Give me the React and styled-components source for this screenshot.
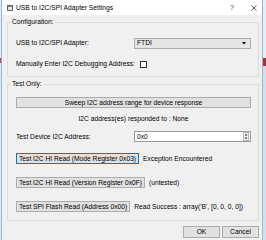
import React from "react";
import styled, { createGlobalStyle } from "styled-components";

const Global = createGlobalStyle`
  html, body { margin: 0; padding: 0; background: #d9e4ef; }
  body { font-family: "Liberation Sans", Arial, sans-serif; color: #000; }
  #root { width: 266px; height: 240px; overflow: hidden; }
`;

const Desktop = styled.div`
  display: flex;
  width: 266px;
  height: 240px;
  overflow: hidden;
  background: #dbe5ef;
`;

const DesktopStrip = styled.div`
  flex: none;
  width: ${(p) => p.$w}px;
  display: flex;
  flex-direction: column;
  background: #dfe7f0;
`;

const Patch = styled.div`
  flex: none;
  height: ${(p) => p.$h}px;
  background: ${(p) => p.$c};
`;

const Window = styled.div`
  flex: none;
  width: 262px;
  box-sizing: border-box;
  border-left: 1px solid #93b8de;
  border-right: 1px solid #93b8de;
  display: flex;
  flex-direction: column;
  background: #f0f0f0;
`;

const TitleBar = styled.div`
  flex: none;
  height: 15px;
  background: #ffffff;
  display: flex;
  align-items: center;
`;

const AppIcon = styled.svg`
  flex: none;
  margin-left: 5px;
  width: 6px;
  height: 6px;
`;

const Title = styled.div`
  margin-left: 3px;
  font-size: 6.7px;
  line-height: 8px;
  white-space: nowrap;
  flex: 1;
`;

const TitleGlyph = styled.div`
  flex: none;
  width: ${(p) => p.$w}px;
  margin-right: ${(p) => p.$mr || 0}px;
  display: flex;
  align-items: center;
  justify-content: center;
  font-size: 7px;
  line-height: 8px;
  color: #444;
`;

const Body = styled.div`
  flex: 1;
  display: flex;
  flex-direction: column;
  padding: 3px 3px 0 5px;
`;

const Group = styled.fieldset`
  margin: ${(p) => p.$mt || 0}px 0 0 0;
  padding: ${(p) => p.$pt}px 7px ${(p) => p.$pb}px 8px;
  border: 1px solid #dcdcdc;
  min-width: 0;
  display: flex;
  flex-direction: column;
`;

const Legend = styled.legend`
  margin-left: -5px;
  padding: 0 1px;
  font-size: 6.7px;
  line-height: 8px;
  height: 8px;
`;

const FormRow = styled.div`
  display: grid;
  grid-template-columns: 118px 1fr;
  align-items: center;
  height: ${(p) => p.$h || 12}px;
  margin-top: ${(p) => p.$mt || 0}px;
`;

const Label = styled.span`
  font-size: 6.7px;
  line-height: 8px;
  white-space: nowrap;
`;

const CheckRow = styled.label`
  display: flex;
  align-items: center;
  gap: 5px;
  height: 12px;
  margin-top: ${(p) => p.$mt || 0}px;
`;

const Combo = styled.div`
  height: 11px;
  box-sizing: border-box;
  border: 1px solid #adadad;
  background: #e5e5e5;
  display: flex;
  align-items: center;
  padding: 0 4px 0 2px;
  font-size: 6.7px;
  line-height: 8px;
`;

const Grow = styled.span`
  flex: 1;
`;

const Check = styled.span`
  flex: none;
  width: 7px;
  height: 7px;
  box-sizing: border-box;
  border: 1px solid #333;
  background: #fff;
  display: block;
`;

const Spin = styled.div`
  height: 11px;
  box-sizing: border-box;
  border: 1px solid #9c9c9c;
  background: #fff;
  display: flex;
  align-items: center;
  padding: 0 1px 0 2px;
  font-size: 6.7px;
  line-height: 8px;
`;

const Button = styled.button`
  font-family: "Liberation Sans", Arial, sans-serif;
  font-size: 6.7px;
  line-height: 8px;
  height: ${(p) => p.$h || 11}px;
  width: ${(p) => (p.$w ? `${p.$w}px` : "auto")};
  box-sizing: border-box;
  margin: 0;
  padding: 0 2px;
  border: 1px solid ${(p) => (p.$focus ? "#0078d7" : "#adadad")};
  background: #e1e1e1;
  color: #000;
  white-space: nowrap;
  flex: none;
`;

const WideButton = styled(Button)`
  width: 100%;
`;

const CenterText = styled.div`
  margin-top: ${(p) => p.$mt}px;
  height: 8px;
  font-size: 6.7px;
  line-height: 8px;
  text-align: center;
  white-space: nowrap;
`;

const ActionRow = styled.div`
  display: flex;
  align-items: center;
  height: 11px;
  margin-top: ${(p) => p.$mt}px;
`;

const Result = styled.span`
  margin-left: 4px;
  font-size: 6.7px;
  line-height: 8px;
  white-space: nowrap;
`;

const Footer = styled.div`
  display: flex;
  justify-content: flex-end;
  gap: 2px;
  margin-top: 5px;
`;

const DownArrow = () => (
  <svg width="4" height="3" viewBox="0 0 4 3">
    <path d="M0 0 H4 L2 2.5 Z" fill="#000" />
  </svg>
);

const SpinArrows = () => (
  <svg width="6" height="9" viewBox="0 0 6 9">
    <rect x="0.5" y="0.5" width="5" height="8" fill="#f4f4f4" stroke="#b5b5b5" />
    <path d="M1.5 3.5 L3 1.8 L4.5 3.5 Z" fill="#222" />
    <path d="M1.5 5.5 L3 7.2 L4.5 5.5 Z" fill="#222" />
  </svg>
);

export default function App() {
  return (
    <>
      <Global />
      <Desktop>
        <DesktopStrip $w={1}>
          <Patch $h={58} $c="#e4ebf3" />
          <Patch $h={5} $c="#c8404a" />
          <Patch $h={177} $c="#dfe7f0" />
        </DesktopStrip>
        <Window>
          <TitleBar>
            <AppIcon viewBox="0 0 6 6">
              <rect x="0.5" y="0.5" width="5" height="5" fill="#dfe9df" stroke="#6b6b6b" />
              <rect x="1" y="1" width="4" height="1" fill="#6b8f6b" />
            </AppIcon>
            <Title>USB to I2C/SPI Adapter Settings</Title>
            <TitleGlyph $w={10} $mr={9}>?</TitleGlyph>
            <TitleGlyph $w={16}>
              <svg width="6" height="6" viewBox="0 0 6 6">
                <path d="M0.5 0.5 L5.5 5.5 M5.5 0.5 L0.5 5.5" stroke="#333" strokeWidth="0.8" />
              </svg>
            </TitleGlyph>
          </TitleBar>
          <Body>
            <Group $pt={11} $pb={6}>
              <Legend>Configuration:</Legend>
              <FormRow>
                <Label>USB to I2C/SPI Adapter:</Label>
                <Combo>
                  <Grow>FTDI</Grow>
                  <DownArrow />
                </Combo>
              </FormRow>
              <CheckRow $mt={9}>
                <Label>Manually Enter I2C Debugging Address:</Label>
                <Check />
              </CheckRow>
            </Group>
            <Group $mt={3} $pt={9} $pb={8}>
              <Legend>Test Only:</Legend>
              <WideButton>Sweep I2C address range for device response</WideButton>
              <CenterText $mt={7}>I2C address(es) responded to : None</CenterText>
              <FormRow $h={11} $mt={8}>
                <Label>Test Device I2C Address:</Label>
                <Spin>
                  <Grow>0x0</Grow>
                  <SpinArrows />
                </Spin>
              </FormRow>
              <ActionRow $mt={11}>
                <Button $focus>Test I2C HI Read (Mode Register 0x03)</Button>
                <Result>Exception Encountered</Result>
              </ActionRow>
              <ActionRow $mt={13}>
                <Button>Test I2C HI Read (Version Register 0x0F)</Button>
                <Result>(untested)</Result>
              </ActionRow>
              <ActionRow $mt={13}>
                <Button>Test SPI Flash Read (Address 0x00)</Button>
                <Result>Read Success : array('B', [0, 0, 0, 0])</Result>
              </ActionRow>
            </Group>
            <Footer>
              <Button $w={37} $h={12}>OK</Button>
              <Button $w={37} $h={12}>Cancel</Button>
            </Footer>
          </Body>
        </Window>
        <DesktopStrip $w={3}>
          <Patch $h={58} $c="#e6edf5" />
          <Patch $h={8} $c="#b52a35" />
          <Patch $h={174} $c="#d3dfec" />
        </DesktopStrip>
      </Desktop>
    </>
  );
}
